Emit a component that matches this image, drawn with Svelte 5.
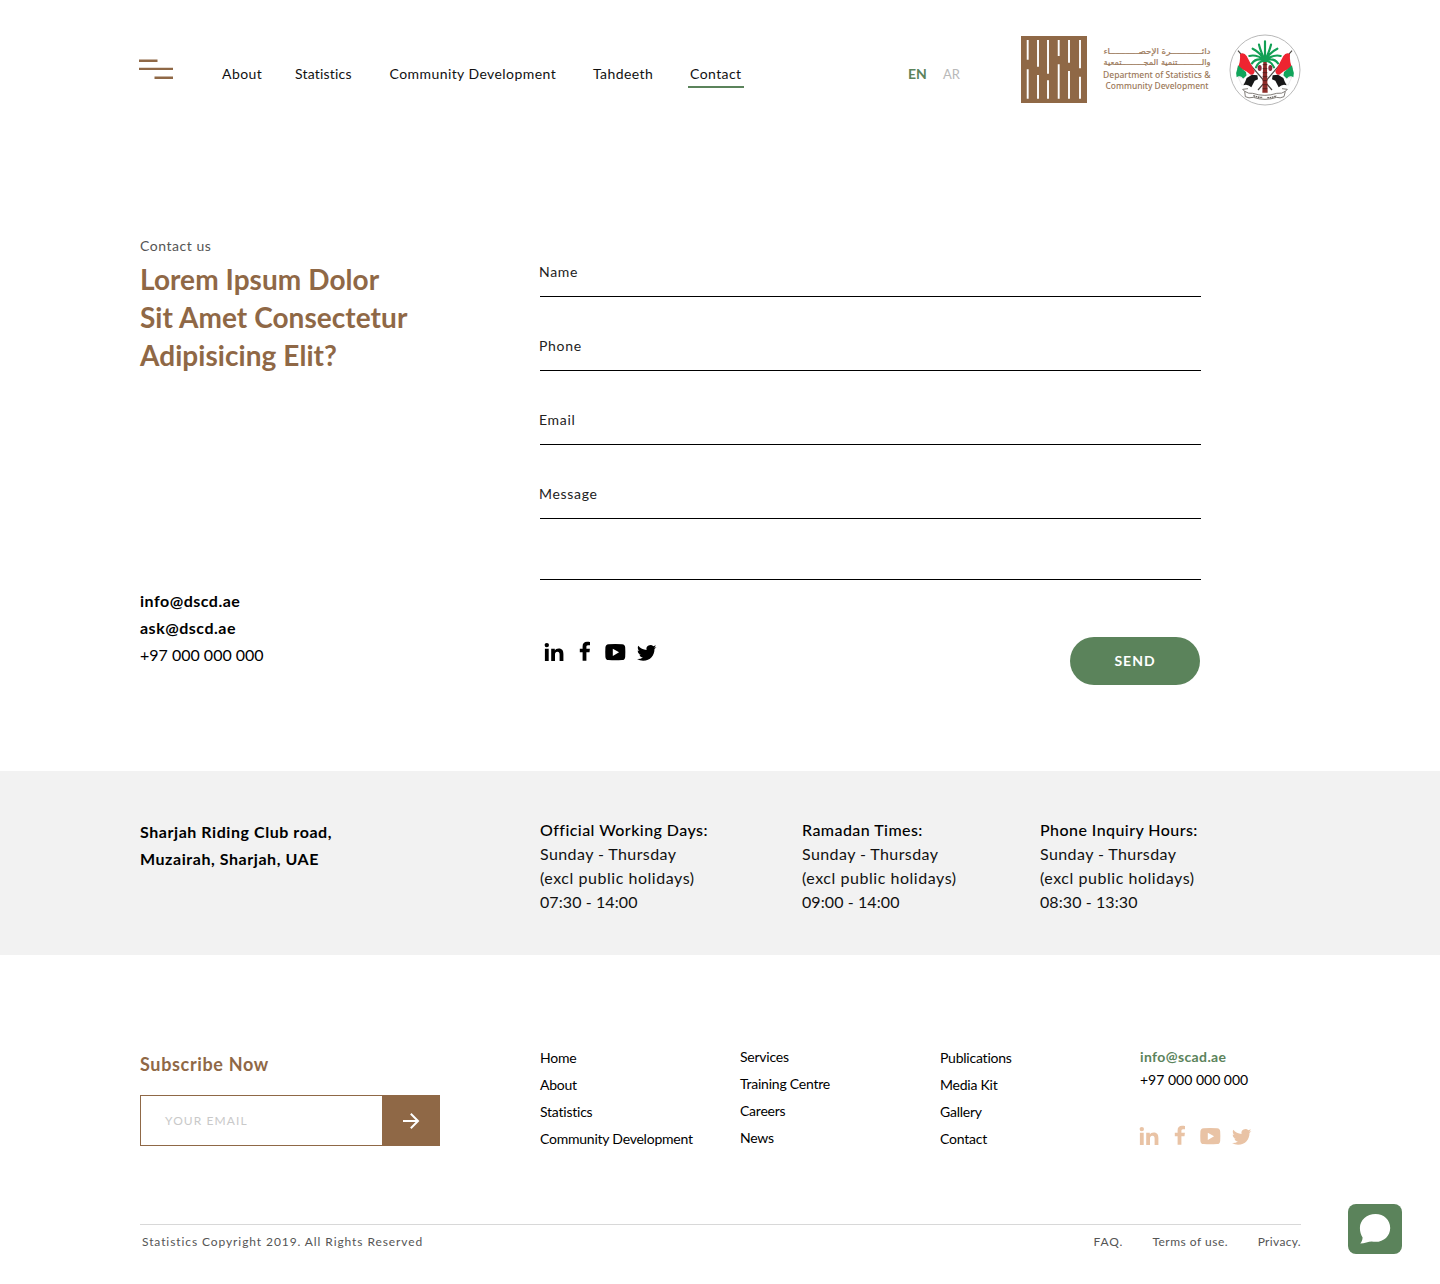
<script>
  const nav = ['About', 'Statistics', 'Community Development', 'Tahdeeth', 'Contact'];
  const fields = ['Name', 'Phone', 'Email', 'Message', ''];
  const hours = [
    { title: 'Official Working Days:', time: '07:30 - 14:00' },
    { title: 'Ramadan Times:', time: '09:00 - 14:00' },
    { title: 'Phone Inquiry Hours:', time: '08:30 - 13:30' }
  ];
  const links = [
    ['Home', 'About', 'Statistics', 'Community Development'],
    ['Services', 'Training Centre', 'Careers', 'News'],
    ['Publications', 'Media Kit', 'Gallery', 'Contact']
  ];
  // Slats of the department logo: x, end of the upper slat, start of the lower slat
  const slats = [
    [6.7, 23.7, 33.3],
    [17, 30.7, 39],
    [27, 37.7, 44.3],
    [37.7, 20, 28.3],
    [48, 26.7, 35],
    [59, 32.3, 40.7]
  ];
</script>

{#snippet social()}
  <svg class="social" width="113" height="22" viewBox="0 0 113 22" fill="currentColor">
    <circle cx="2.800" cy="4.100" r="2.200" />
    <path transform="translate(.400 0)" d="M.5 7.8h3.8V20H.5zM6.8 7.8h3.6v1.7c.6-1.1 2-2 3.9-2 3.7 0 4.7 2.3 4.7 5.6V20h-3.8v-6.2c0-1.6-.3-3-2.2-3-1.900 0-2.400 1.400-2.400 3V20H6.800z" />
    <path transform="translate(.800 -.300)" d="M37.800 20v-8.500H35V8h2.800V5.600c0-3 1.700-4.500 4.400-4.500 1.500 0 2.600.1 3 .2v3.200h-2c-1.300 0-1.600.8-1.600 1.700V8h3.500l-.4 3.500h-3.100V20z" />
    <path fill-rule="evenodd" d="M64.500 3.300q6.800-.5 13.600 0 3 .2 3.100 3.300.3 4.700 0 9.300-.2 3-3.100 3.200-6.800.5-13.600 0-2.900-.2-3.100-3.200-.3-4.600 0-9.300.2-3.100 3.100-3.300zM68.800 7.700v7.200l6.300-3.600z" />
    <path transform="translate(93 2.200) scale(.81)" d="M23.953 4.570a10 10 0 01-2.825.775 4.958 4.958 0 002.163-2.723c-.951.555-2.005.959-3.127 1.184a4.920 4.920 0 00-8.384 4.482C7.690 8.095 4.067 6.130 1.640 3.162a4.822 4.822 0 00-.666 2.475c0 1.710.870 3.213 2.188 4.096a4.904 4.904 0 01-2.228-.616v.060a4.923 4.923 0 003.946 4.827 4.996 4.996 0 01-2.212.085 4.936 4.936 0 004.604 3.417 9.867 9.867 0 01-6.102 2.105c-.390 0-.779-.023-1.170-.067a13.995 13.995 0 007.557 2.209c9.053 0 13.998-7.496 13.998-13.985 0-.210 0-.420-.015-.630A9.935 9.935 0 0024 4.590z" />
  </svg>
{/snippet}

{#snippet flag()}
  <path d="M50 68 152 186" stroke="#4a4541" stroke-width="3.500" />
  <path d="M56 78Q68 72 76 84L100 130Q98 142 88 140 74 128 62 124L48 122Q58 104 56 78Z" fill="#ee2430" />
  <path d="M50 112 62 122 74 132 76 144 66 152Q56 140 46 148 42 134 48 122Z" fill="#10a45a" />
  <path d="M50 146 66 152 78 140 92 142 76 158 62 172Z" fill="#fff" stroke="#bbb" />
  <path d="M76 150 92 140 108 142 110 154 100 158 90 178Q78 166 66 172 72 162 76 150Z" fill="#171717" />
{/snippet}

<div class="page">
  <header>
    <button class="menu" aria-label="Menu">
      <svg width="35" height="22" viewBox="0 0 35 22" fill="#8f6846">
        <path d="M0 1.500h18.500v2.400H0zM0 9.700h34v2.300H0zM15.500 18.600H34V21H15.500z" />
      </svg>
    </button>
    <nav>
      {#each nav as item}
        <a href="#top" class:active={item === 'Contact'} class:snug={item === 'Statistics'}>{item}</a>
      {/each}
    </nav>
    <div class="lang"><b>EN</b><span>AR</span></div>
    <svg class="mark" width="66" height="67" viewBox="0 0 66 67">
      <path fill="#8f6846" d="M0 0h66v67H0z" />
      {#each slats as [x, a, b]}
        <path d="M{x} 4V{a}M{x} {b}V62.700" stroke="#fff" stroke-width="1.900" />
      {/each}
    </svg>
    <svg class="wordmark" width="112" height="56" viewBox="0 0 112 56" fill="#9b7859">
      <g class="ar" direction="rtl">
        <text x="108.500" y="13.500" textLength="107" lengthAdjust="spacingAndGlyphs">دائــــــــــــرة الإحصـــــــــــاء</text>
        <text x="108.500" y="25" textLength="107" lengthAdjust="spacingAndGlyphs">والــــــــــتنمية المجـــــــــتمعية</text>
      </g>
      <g class="en">
        <text x="1" y="37.500" textLength="107.500" lengthAdjust="spacingAndGlyphs">Department of Statistics &amp;</text>
        <text x="3.500" y="49" textLength="103" lengthAdjust="spacingAndGlyphs">Community Development</text>
      </g>
    </svg>
    <svg class="emblem" width="72" height="72" viewBox="23 18 216 216" fill="none">
      <circle cx="131" cy="126" r="105" fill="#fff" stroke="#aaa" stroke-width="2.500" />
      {@render flag()}
      <g transform="matrix(-1 0 0 1 262 0)">{@render flag()}</g>
      <path d="M126 96h10l3 98h-16z" fill="#8d2b28" />
      <path d="M124 110h14M124 122h14M124 134h14M124 146h14M124 158h14M124 170h14M124 182h14" stroke="#4b1d1b" stroke-width="2.500" />
      <ellipse cx="115" cy="120" rx="6" ry="9" fill="#8d2b3c" />
      <ellipse cx="147" cy="120" rx="6" ry="9" fill="#8d2b3c" />
      <g stroke="#12a055" stroke-width="6.500" stroke-linecap="round">
        <path d="M131 98V40M131 98Q118 70 113 50M131 98Q144 70 149 50M131 96Q112 70 94 62M131 96Q150 70 168 62M131 96Q104 78 84 84M131 96Q158 78 178 84M131 97Q104 88 92 106M131 97Q158 88 170 106M131 99Q112 98 104 118M131 99Q150 98 158 118" />
      </g>
      <path d="M70 190Q82 198 94 196 131 208 166 196 182 198 192 190L188 206Q176 212 166 208 131 220 96 208 82 212 72 206ZM70 190 64 184 80 182M192 190 198 184 182 182" fill="#fff" stroke="#69645f" stroke-width="2.500" />
      <path d="M96 203Q112 209 124 208M138 209Q152 209 166 203" stroke="#69645f" stroke-width="4" stroke-dasharray="5 2" />
    </svg>
  </header>

  <main>
    <section class="intro">
      <p class="eyebrow">Contact us</p>
      <h1>Lorem Ipsum Dolor<br />Sit Amet Consectetur<br />Adipisicing Elit?</h1>
      <div class="reach">
        <b>info@dscd.ae</b>
        <b>ask@dscd.ae</b>
        <span>+97 000 000 000</span>
      </div>
    </section>
    <form class="contact">
      {#each fields as label}
        <div class="field" class:blank={!label}><span>{label}</span></div>
      {/each}
      <div class="actions">
        {@render social()}
        <button type="button" class="send">SEND</button>
      </div>
    </form>
  </main>

  <section class="band">
    <address>Sharjah Riding Club road,<br />Muzairah, Sharjah, UAE</address>
    {#each hours as h}
      <div class="hours">
        <h2>{h.title}</h2>
        <p>Sunday - Thursday</p>
        <p class="excl">(excl public holidays)</p>
        <p class="time">{h.time}</p>
      </div>
    {/each}
  </section>

  <footer>
    <div class="columns">
      <div class="subscribe">
        <h3>Subscribe Now</h3>
        <div class="email">
          <span>YOUR EMAIL</span>
          <button aria-label="Subscribe">
            <svg width="18" height="18" viewBox="0 0 18 18" fill="none" stroke="#fff" stroke-width="2">
              <path d="M1 9h14.500M8.800 1.800 16 9l-7.200 7.200" />
            </svg>
          </button>
        </div>
      </div>
      {#each links as group}
        <ul>
          {#each group as link}<li>{link}</li>{/each}
        </ul>
      {/each}
      <div class="details">
        <b>info@scad.ae</b>
        <span>+97 000 000 000</span>
        {@render social()}
      </div>
    </div>
    <div class="legal">
      <span class="copy">Statistics Copyright 2019. All Rights Reserved</span>
      <span class="faq">FAQ.</span>
      <span class="terms">Terms of use.</span>
      <span class="privacy">Privacy.</span>
    </div>
  </footer>

  <button class="chat" aria-label="Chat">
    <svg width="32" height="32" viewBox="0 0 32 32" fill="#fff">
      <path d="M16.500 1C25 1 31.200 7 31.200 14.900S25 28.800 16.500 28.800c-1.400 0-2.600-.1-3.800-.4C9.500 28.600 5.500 30 1.300 30.600c1.400-1.700 2.200-3.900 2.300-6.100C2 22 .9 18.700.9 14.900.9 7 8 1 16.500 1z" />
    </svg>
  </button>
</div>

<style>
  :global(body) {
    margin: 0;
    background: #fff;
  }
  .page {
    position: relative;
    box-sizing: border-box;
    width: 1440px;
    height: 1284px;
    font: 400 14px/20px Lato, 'Open Sans', sans-serif;
    color: #000;
  }
  h1, h2, h3, p, ul, address {
    margin: 0;
    padding: 0;
    list-style: none;
    font-style: normal;
  }
  button {
    border: 0;
    padding: 0;
    background: none;
    font-family: inherit;
  }
  svg {
    display: block;
    flex: none;
  }

  header {
    display: flex;
    align-items: flex-start;
    box-sizing: border-box;
    height: 202px;
    padding: 34px 139px 0;
  }
  .menu {
    width: 83px;
    padding-top: 24px;
  }
  nav {
    display: grid;
    grid-template-columns: 73px 94.500px 203.500px 97px 58px;
    width: 686px;
    padding-top: 30px;
    letter-spacing: 0.430px;
  }
  nav a {
    justify-self: start;
    color: #111;
    text-decoration: none;
  }
  nav .snug {
    letter-spacing: 0.200px;
  }
  nav .active {
    margin-left: -2.500px;
    padding: 0 2.500px 2px;
    border-bottom: 2px solid #5b835b;
  }
  .lang {
    display: flex;
    justify-content: space-between;
    width: 52px;
    margin-right: 61px;
    padding-top: 30px;
  }
  .lang b {
    color: #5b835b;
  }
  .lang span {
    font-size: 13px;
    color: #b9b9b9;
  }
  .mark {
    margin-top: 2px;
  }
  .wordmark {
    margin: 6px 0 0 15px;
    overflow: visible;
  }
  .ar {
    font: 8px 'DejaVu Sans', sans-serif;
    stroke: #9b7859;
    stroke-width: 0.200px;
  }
  .en {
    font: 500 9px 'Noto Sans', sans-serif;
  }
  .emblem {
    margin-left: 15px;
  }

  main {
    display: flex;
    box-sizing: border-box;
    height: 569px;
    padding: 34px 0 0 140px;
  }
  .intro {
    width: 400px;
  }
  .eyebrow {
    color: #555;
    letter-spacing: 0.540px;
  }
  h1 {
    margin-top: 4px;
    font: 700 28px/38px Lato, sans-serif;
    letter-spacing: 0.060px;
    color: #8f6846;
  }
  .reach {
    display: flex;
    flex-direction: column;
    margin-top: 213px;
    font-size: 16px;
    line-height: 27px;
  }
  .reach b {
    letter-spacing: 0.500px;
  }
  .contact {
    width: 661px;
    padding-top: 26px;
  }
  .field {
    height: 34px;
    margin-bottom: 39px;
    border-bottom: 1px solid #000;
    letter-spacing: 0.700px;
  }
  .field span {
    display: block;
    margin-left: -1px;
    color: #222;
  }
  .blank {
    height: 21px;
    margin-bottom: 0;
  }
  .actions {
    display: flex;
    justify-content: space-between;
    margin: 57px 1px 0 4px;
  }
  .actions .social {
    margin-top: 4px;
  }
  .send {
    width: 130px;
    height: 48px;
    padding-bottom: 1px;
    border-radius: 24px;
    background: #5b835b;
    color: #fff;
    font-size: 14px;
    font-weight: 700;
    letter-spacing: 1px;
  }

  .band {
    display: grid;
    grid-template-columns: 400px 262px 238px 1fr;
    box-sizing: border-box;
    height: 184px;
    padding: 47px 0 0 140px;
    background: #f2f2f2;
    font-size: 16px;
  }
  address {
    font-weight: 700;
    line-height: 27px;
    letter-spacing: 0.560px;
  }
  .hours {
    line-height: 24px;
    letter-spacing: 0.410px;
    color: #111;
  }
  h2 {
    font-size: 16px;
    font-weight: 500;
    letter-spacing: 0.440px;
    color: #000;
  }
  .excl {
    letter-spacing: 0.540px;
  }
  .time {
    letter-spacing: 0.090px;
  }

  .columns {
    display: grid;
    grid-template-columns: 400px 200px 200px 200px 1fr;
    height: 181px;
    padding: 88px 0 0 140px;
  }
  .subscribe {
    width: 300px;
    padding-top: 9px;
  }
  h3 {
    font-size: 18px;
    line-height: 24px;
    color: #8f6846;
    letter-spacing: 0.650px;
  }
  .email {
    display: flex;
    justify-content: space-between;
    box-sizing: border-box;
    height: 51px;
    margin-top: 19px;
    border: 1px solid #8f6846;
  }
  .email span {
    padding-left: 24px;
    font-size: 12px;
    line-height: 49px;
    letter-spacing: 1.100px;
    color: #c9c9c9;
  }
  .email button {
    display: grid;
    place-items: center;
    width: 57px;
    background: #8f6846;
  }
  ul {
    padding-top: 1px;
    line-height: 27px;
    letter-spacing: -0.230px;
  }
  ul:nth-of-type(2) {
    padding-top: 0;
  }
  .details {
    display: flex;
    flex-direction: column;
    padding-top: 2px;
    line-height: 23px;
  }
  .details b {
    color: #5b835b;
    letter-spacing: 0.380px;
  }
  .details .social {
    margin: 34px 0 0 -1px;
    color: #e9c3a5;
  }

  .legal {
    display: flex;
    width: 1159px;
    margin-left: 140px;
    padding: 7px 0 0 2px;
    border-top: 1px solid #d8d8d8;
    font-size: 12px;
    color: #555;
  }
  .copy {
    flex: 1;
    letter-spacing: 0.910px;
  }
  .faq {
    letter-spacing: 0.950px;
  }
  .terms {
    margin: 0 29.500px 0 29px;
    letter-spacing: 0.500px;
  }
  .privacy {
    letter-spacing: 0.330px;
  }

  .chat {
    position: absolute;
    left: 1348px;
    top: 1204px;
    display: grid;
    place-items: center;
    width: 54px;
    height: 50px;
    border-radius: 8px;
    background: #5b835b;
  }
</style>
